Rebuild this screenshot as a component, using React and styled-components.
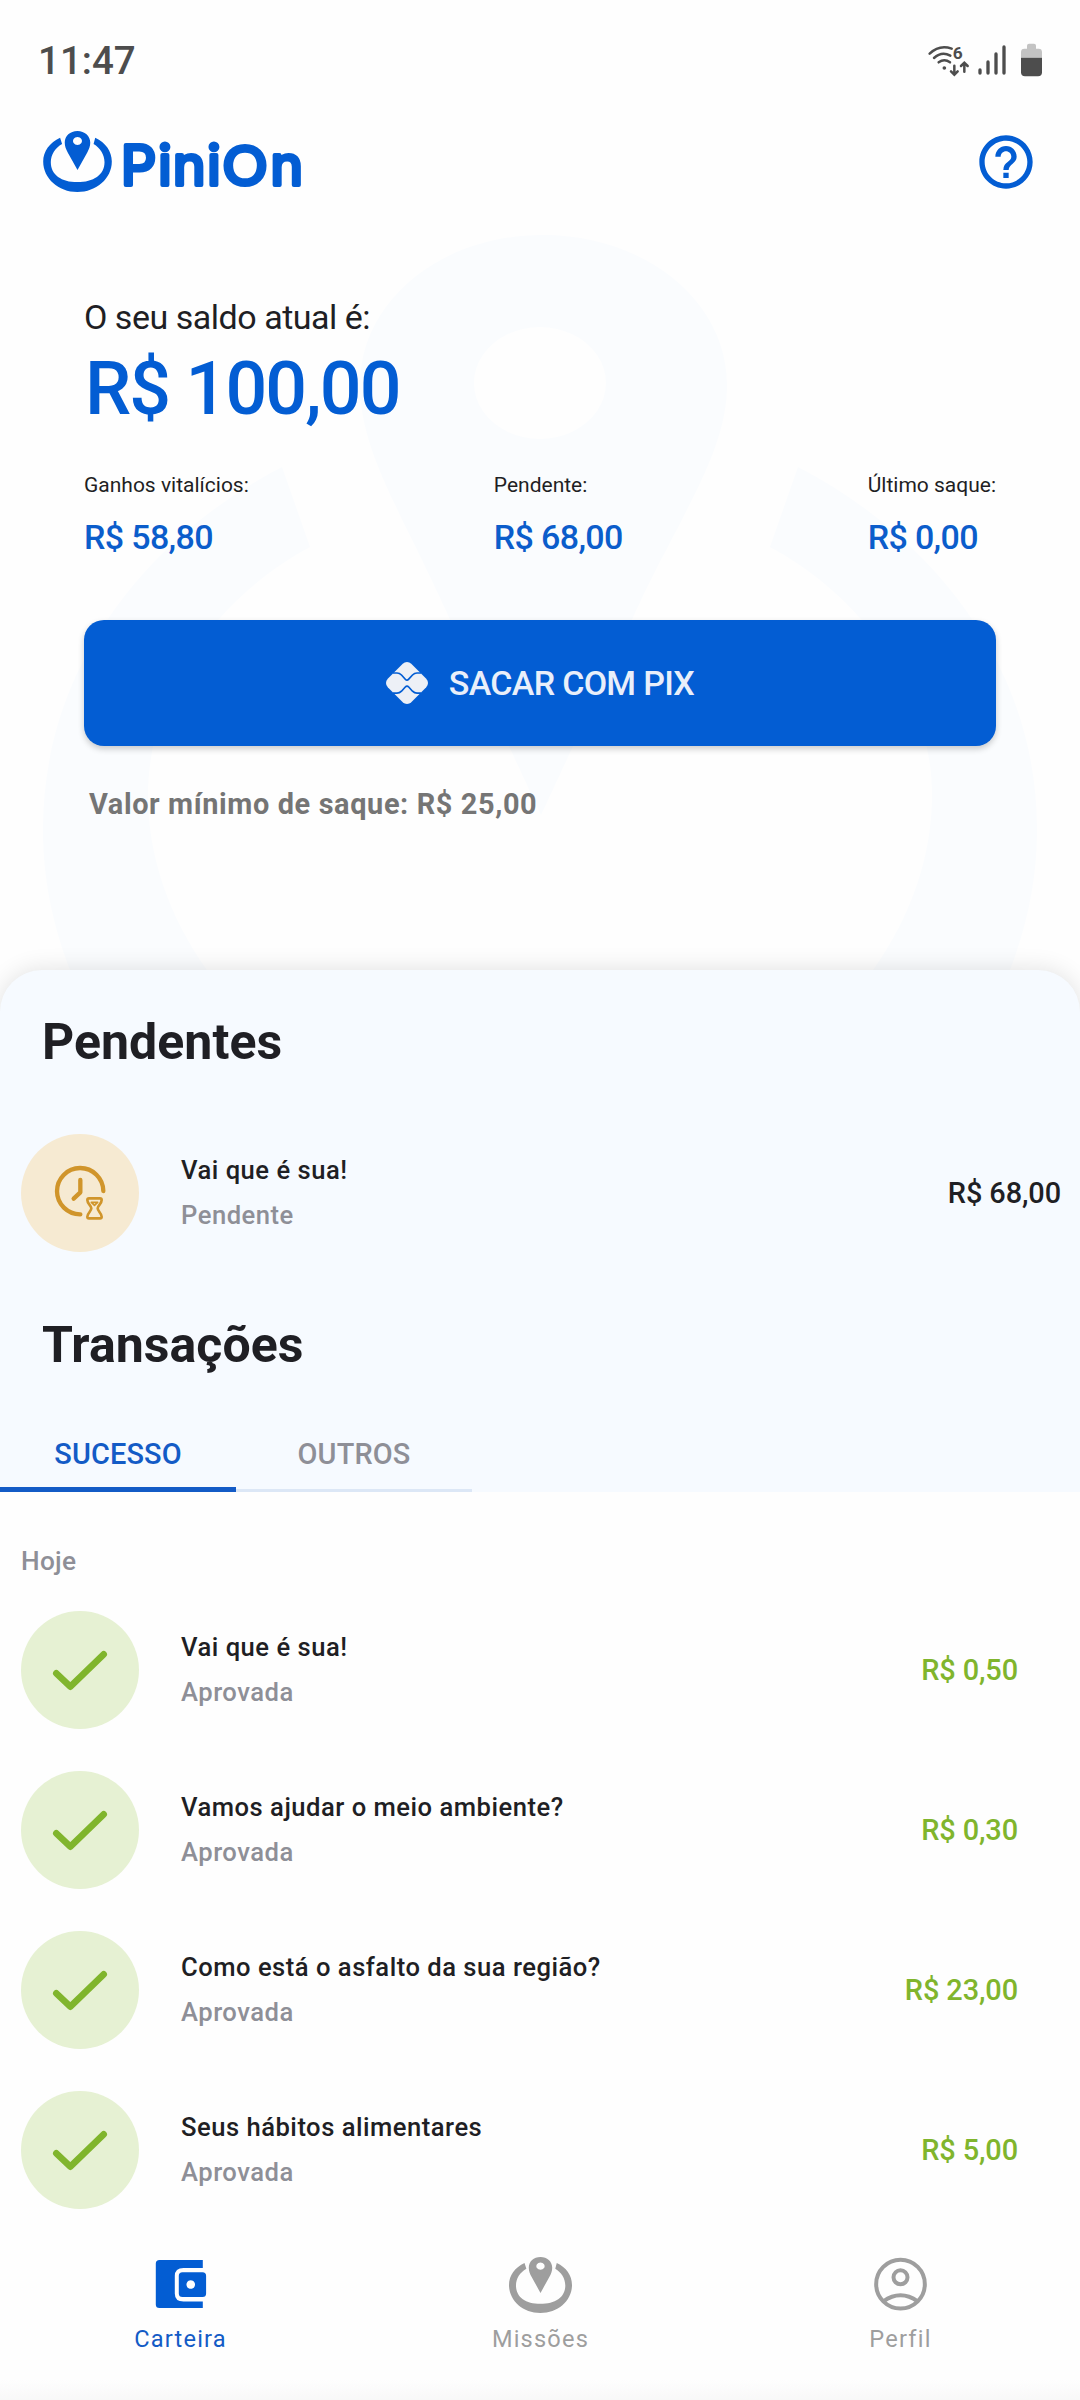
import React, { useState } from "react"
import styled, { createGlobalStyle } from "styled-components"
import { MdHelpOutline } from "react-icons/md"

const GlobalStyle = createGlobalStyle`
  * {
    box-sizing: border-box;
  }
  body {
    margin: 0;
    background: #fefefe;
    font-family: Roboto, "Noto Sans", sans-serif;
    color: #1f1f24;
  }
  button {
    font-family: inherit;
    border: none;
    padding: 0;
    background: none;
    cursor: pointer;
  }
  svg {
    display: block;
  }
`

const blue = "#035dd3"
const grey = "#8e8f97"
const green = "#80b52d"

const Screen = styled.div`
  width: 1080px;
  height: 2400px;
  display: flex;
  flex-direction: column;
  overflow: hidden;
  background: #fefefe;
`

const StatusBar = styled.div`
  height: 121px;
  padding: 0 37px 0 38px;
  display: flex;
  justify-content: space-between;
  align-items: center;
  flex-shrink: 0;
`

const Time = styled.span`
  font-size: 38.5px;
  font-weight: 500;
  line-height: 46px;
  color: #4d4d4d;
`

const Header = styled.header`
  height: 81px;
  padding: 0 42px 0 43px;
  display: flex;
  justify-content: space-between;
  align-items: center;
  flex-shrink: 0;
`

const HelpButton = styled.button`
  color: ${blue};
  font-size: 64px;
  line-height: 0;
`

const Wallet = styled.section`
  position: relative;
  height: 768px;
  padding: 95px 84px 0;
  flex-shrink: 0;
`

const Watermark = styled.svg`
  position: absolute;
  top: 0;
  left: 0;
  fill: #fafcfe;
`

const WalletContent = styled.div`
  position: relative;
`

const BalanceLabel = styled.div`
  font-size: 34px;
  line-height: 40px;
  letter-spacing: -0.48px;
`

const Balance = styled.div`
  margin: 9px 0 0 1px;
  font-size: 73.5px;
  line-height: 86px;
  font-weight: 500;
  letter-spacing: -1.9px;
  color: ${blue};
`

const Stats = styled.div`
  margin-top: 41px;
  display: flex;
  justify-content: space-between;
`

const StatLabel = styled.div`
  font-size: 21px;
  line-height: 24px;
`

const StatValue = styled.div`
  margin-top: 20px;
  font-size: 34px;
  line-height: 40px;
  font-weight: 500;
  letter-spacing: -0.65px;
  color: #0b5dcb;
`

const WithdrawButton = styled.button`
  margin-top: 63px;
  width: 100%;
  height: 126px;
  border-radius: 20px;
  display: flex;
  justify-content: center;
  align-items: center;
  gap: 21px;
  background: ${blue};
  box-shadow: 0 3px 6px rgba(0, 0, 0, 0.2);
  color: #e9effa;
  font-size: 34px;
  font-weight: 500;
  letter-spacing: -0.7px;
`

const Minimum = styled.div`
  margin: 41px 0 0 5px;
  font-size: 28.9px;
  line-height: 34px;
  font-weight: 700;
  letter-spacing: 0.62px;
  color: #757575;
`

const Panel = styled.section`
  position: relative;
  height: 522px;
  padding-top: 43px;
  border-radius: 42px 42px 0 0;
  background: #f6faff;
  box-shadow: 0 0 24px rgba(0, 0, 0, 0.12);
  clip-path: inset(-40px 0 0 0);
  flex-shrink: 0;
`

const Heading = styled.h2`
  margin: ${props => props.$top || 0}px 0 0 42px;
  font-size: 50px;
  line-height: 58px;
  font-weight: 700;
  letter-spacing: 0.05px;
`

const Tabs = styled.div`
  margin-top: 38px;
  height: 80px;
  display: flex;
`

const Tab = styled.button`
  width: 236px;
  height: 80px;
  padding-top: ${props => (props.$active ? 8 : 6)}px;
  border-bottom: ${props =>
    props.$active ? "5px solid #135bc6" : "3px solid #dce7f6"};
  font-size: 28.9px;
  font-weight: 500;
  letter-spacing: 0.15px;
  color: ${props => (props.$active ? "#135bc6" : grey)};
`

const History = styled.section`
  padding-top: 54px;
  height: 723px;
  flex-shrink: 0;
`

const Day = styled.div`
  margin: 0 0 35px 21px;
  font-size: 26.25px;
  line-height: 30px;
  font-weight: 500;
  letter-spacing: 0.3px;
  color: ${grey};
`

const Rows = styled.div`
  display: flex;
  flex-direction: column;
  gap: 42px;
`

const Row = styled.div`
  margin-top: ${props => props.$top || 0}px;
  height: 118px;
  padding: 0 ${props => props.$right}px 0 21px;
  display: flex;
  align-items: center;
`

const Badge = styled.div`
  width: 118px;
  height: 118px;
  border-radius: 50%;
  background: ${props => props.$color};
`

const Info = styled.div`
  flex: 1;
  margin-left: 42px;
  padding-bottom: 2px;
  font-size: 25.6px;
  line-height: 30px;
  font-weight: 500;
  letter-spacing: 0.5px;
`

const Status = styled.div`
  margin-top: 15px;
  color: ${grey};
`

const Amount = styled.div`
  font-size: 28.9px;
  line-height: 34px;
  font-weight: 500;
  letter-spacing: -0.1px;
  color: ${props => props.$color};
`

const Nav = styled.nav`
  flex: 1;
  padding-top: 42px;
  display: flex;
  background: linear-gradient(#fefefe 165px, #f8f8f8 185px);
`

const NavItem = styled.button`
  flex: 1;
  padding-left: 1px;
  display: flex;
  flex-direction: column;
  align-items: center;
  color: ${props => (props.$active ? "#135bc6" : "#9e9e9e")};
  font-size: 23.6px;
  line-height: 28px;
  letter-spacing: 1.2px;
`

const NavIcon = styled.span`
  height: 56px;
  margin-bottom: 12px;
  display: flex;
  align-items: flex-start;
`

const StatusIcons = () => (
  <svg width="115" height="35" viewBox="144 130 345 105" fill="#4d4d4d">
    <g fill="none" stroke="#4d4d4d" strokeWidth="7.5" strokeLinecap="round">
      <path d="M149 162Q178 134 215 147" />
      <path d="M162 175Q185 154 211 168" />
      <path d="M176 188Q193 176 210 188" />
      <path d="M223 198V224M213 215L223 225L233 215" />
      <path d="M253 216V190M243 199L253 189L263 199" />
    </g>
    <circle cx="193" cy="205" r="5.5" />
    <text x="218" y="178" fontSize="52" fontWeight="700">
      6
    </text>
    <rect x="295" y="206" width="10" height="19" rx="5" />
    <rect x="319" y="182" width="10" height="43" rx="5" />
    <rect x="343" y="158" width="10" height="67" rx="5" />
    <rect x="367" y="137" width="10" height="88" rx="5" />
    <path
      fill="#c3c3c3"
      d="M423 174V157Q423 147 433 147H441V138Q441 132 447 132H462Q468 132 468 138V147H476Q486 147 486 157V174Z"
    />
    <path d="M423 174H486V218Q486 230 474 230H435Q423 230 423 218Z" />
  </svg>
)

const PinMark = ({ width, height }) => (
  <svg
    width={width}
    height={height}
    viewBox="129 393 207 184"
    fill="currentColor"
  >
    <path d="M180 413C149 427 129 454 129 485C129 536 175 577 232 577C290 577 336 536 336 485C336 454 317 427 286 413L281 432C301 444 314 464 314 487C314 525 281 547 232 547C184 547 152 525 152 487C152 464 165 444 186 432Z" />
    <path
      fillRule="evenodd"
      d="M232.500 393C210 393 194 408 194 428C194 440 198 448 203 458L232.500 511L262 458C267 448 271 440 271 428C271 408 254 393 232.500 393ZM232.500 411A13.500 12 0 1 1 232.400 411Z"
    />
  </svg>
)

const LogoBox = styled.div`
  display: flex;
  align-items: center;
  color: ${blue};
`

// Inter with a round outline; the O is set in Lato for its circular shape
const Logo = () => (
  <LogoBox>
    <PinMark width="69" height="61" />
    <svg width="200" height="77" viewBox="112 123 200 77">
      <text
        x="121 158.300 173 207.300 223 270.500"
        y="185"
        fontFamily="Inter, sans-serif"
        fontSize="55"
        fontWeight="400"
        fill="currentColor"
        stroke="currentColor"
        strokeWidth="4.200"
        strokeLinejoin="round"
      >
        Pini
        <tspan fontFamily="Lato, sans-serif" fontSize="55">
          O
        </tspan>
        n
      </text>
    </svg>
  </LogoBox>
)

const PixIcon = () => (
  <svg width="42" height="42" viewBox="0 0 42 42">
    <rect
      x="4.400"
      y="4.400"
      width="33.200"
      height="33.200"
      rx="6"
      fill="#edf0f6"
      transform="rotate(45 21 21)"
    />
    <g fill="none" stroke={blue} strokeWidth="1.700">
      <path d="M7 11H11C13 11 14.500 12 15.500 13L19.300 17.200Q21 19 22.700 17.200L26.500 13C27.500 12 29 11 31 11H35" />
      <path d="M7 31.200H11C13 31.200 14.500 30.200 15.500 29.200L19.300 25Q21 23.200 22.700 25L26.500 29.200C27.500 30.200 29 31.200 31 31.200H35" />
    </g>
  </svg>
)

const ClockIcon = () => (
  <svg
    width="118"
    height="118"
    viewBox="0 0 354 354"
    fill="none"
    stroke="#d0952b"
    strokeLinecap="round"
    strokeLinejoin="round"
  >
    <g strokeWidth="13">
      <path d="M247 171A69.500 69.500 0 1 0 178 241" />
      <path d="M178 138V175L158 194" />
    </g>
    <path
      strokeWidth="8"
      d="M204 193H237Q242 193 242 198C242 210 230 214 230 223C230 232 242 238 242 248Q242 253 237 253H204Q199 253 199 248C199 238 211 232 211 223C211 214 199 210 199 198Q199 193 204 193Z"
    />
    <path strokeWidth="5" d="M211 205H230L220.500 214Z" />
  </svg>
)

const CheckIcon = () => (
  <svg width="118" height="118" viewBox="0 0 354 354" fill="none">
    <path
      d="M106 187L148 227L248 130"
      stroke={green}
      strokeWidth="20"
      strokeLinecap="round"
      strokeLinejoin="round"
    />
  </svg>
)

const WalletIcon = () => (
  <svg width="63" height="56" viewBox="1.500 0 63 56" fill={blue}>
    <path d="M12 3H55.300V11H36Q27.300 11 27.300 19V36.500Q27.300 44.500 36 44.500H55.300V51H12Q8.300 51 8.300 47.500V6.500Q8.300 3 12 3Z" />
    <path
      fillRule="evenodd"
      d="M35 15.300H55Q58.600 15.300 58.600 18.800V36.500Q58.600 40 55 40H35Q31.300 40 31.300 36.500V18.800Q31.300 15.300 35 15.300ZM43.300 23.200A4.300 4.300 0 1 1 43.200 23.200Z"
    />
  </svg>
)

const ProfileIcon = () => (
  <svg
    width="53"
    height="54"
    viewBox="342 171 159 162"
    fill="none"
    stroke="currentColor"
    strokeWidth="12"
  >
    <circle cx="421.500" cy="252.500" r="73" />
    <circle cx="421.500" cy="232" r="21" />
    <path d="M370 304Q421.500 268 473 304" />
  </svg>
)

const transactions = [
  { title: "Vai que é sua!", amount: "R$ 0,50" },
  { title: "Vamos ajudar o meio ambiente?", amount: "R$ 0,30" },
  { title: "Como está o asfalto da sua região?", amount: "R$ 23,00" },
  { title: "Seus hábitos alimentares", amount: "R$ 5,00" },
]

const Stat = ({ label, value }) => (
  <div>
    <StatLabel>{label}</StatLabel>
    <StatValue>{value}</StatValue>
  </div>
)

const App = () => {
  const [tab, setTab] = useState("SUCESSO")

  return (
    <Screen>
      <GlobalStyle />
      <StatusBar>
        <Time>11:47</Time>
        <StatusIcons />
      </StatusBar>
      <Header>
        <Logo />
        <HelpButton type="button">
          <MdHelpOutline />
        </HelpButton>
      </Header>
      <Wallet>
        <Watermark width="1080" height="768" viewBox="0 202 1080 768">
          <path
            fillRule="evenodd"
            d="M543 235C442 235 360 300 360 385C360 450 400 510 441 600L541 815L641 600C684 510 727 450 727 385C727 300 644 235 543 235ZM540 327A66 56 0 1 1 539.900 327Z"
          />
          <path d="M282 467C160 530 43 655 43 830C43 880 53 925 70 970H207C168 915 148 855 148 795C148 690 220 595 310 547Z" />
          <path d="M798 467C920 530 1037 655 1037 830C1037 880 1027 925 1010 970H873C912 915 932 855 932 795C932 690 860 595 770 547Z" />
        </Watermark>
        <WalletContent>
          <BalanceLabel>O seu saldo atual é:</BalanceLabel>
          <Balance>R$ 100,00</Balance>
          <Stats>
            <Stat label="Ganhos vitalícios:" value="R$ 58,80" />
            <Stat label="Pendente:" value="R$ 68,00" />
            <Stat label="Último saque:" value="R$ 0,00" />
          </Stats>
          <WithdrawButton type="button">
            <PixIcon />
            SACAR COM PIX
          </WithdrawButton>
          <Minimum>Valor mínimo de saque: R$ 25,00</Minimum>
        </WalletContent>
      </Wallet>
      <Panel>
        <Heading>Pendentes</Heading>
        <Row $top={63} $right={19}>
          <Badge $color="#f6ead2">
            <ClockIcon />
          </Badge>
          <Info>
            Vai que é sua!
            <Status>Pendente</Status>
          </Info>
          <Amount $color="#1f1f24">R$ 68,00</Amount>
        </Row>
        <Heading $top={64}>Transações</Heading>
        <Tabs>
          {["SUCESSO", "OUTROS"].map(name => (
            <Tab
              key={name}
              type="button"
              $active={tab === name}
              onClick={() => setTab(name)}
            >
              {name}
            </Tab>
          ))}
        </Tabs>
      </Panel>
      <History>
        <Day>Hoje</Day>
        <Rows>
          {transactions.map(({ title, amount }) => (
            <Row key={title} $right={62}>
              <Badge $color="#e6f1d3">
                <CheckIcon />
              </Badge>
              <Info>
                {title}
                <Status>Aprovada</Status>
              </Info>
              <Amount $color={green}>{amount}</Amount>
            </Row>
          ))}
        </Rows>
      </History>
      <Nav>
        <NavItem type="button" $active>
          <NavIcon>
            <WalletIcon />
          </NavIcon>
          Carteira
        </NavItem>
        <NavItem type="button">
          <NavIcon>
            <PinMark width="63" height="56" />
          </NavIcon>
          Missões
        </NavItem>
        <NavItem type="button">
          <NavIcon>
            <ProfileIcon />
          </NavIcon>
          Perfil
        </NavItem>
      </Nav>
    </Screen>
  )
}

export default App
